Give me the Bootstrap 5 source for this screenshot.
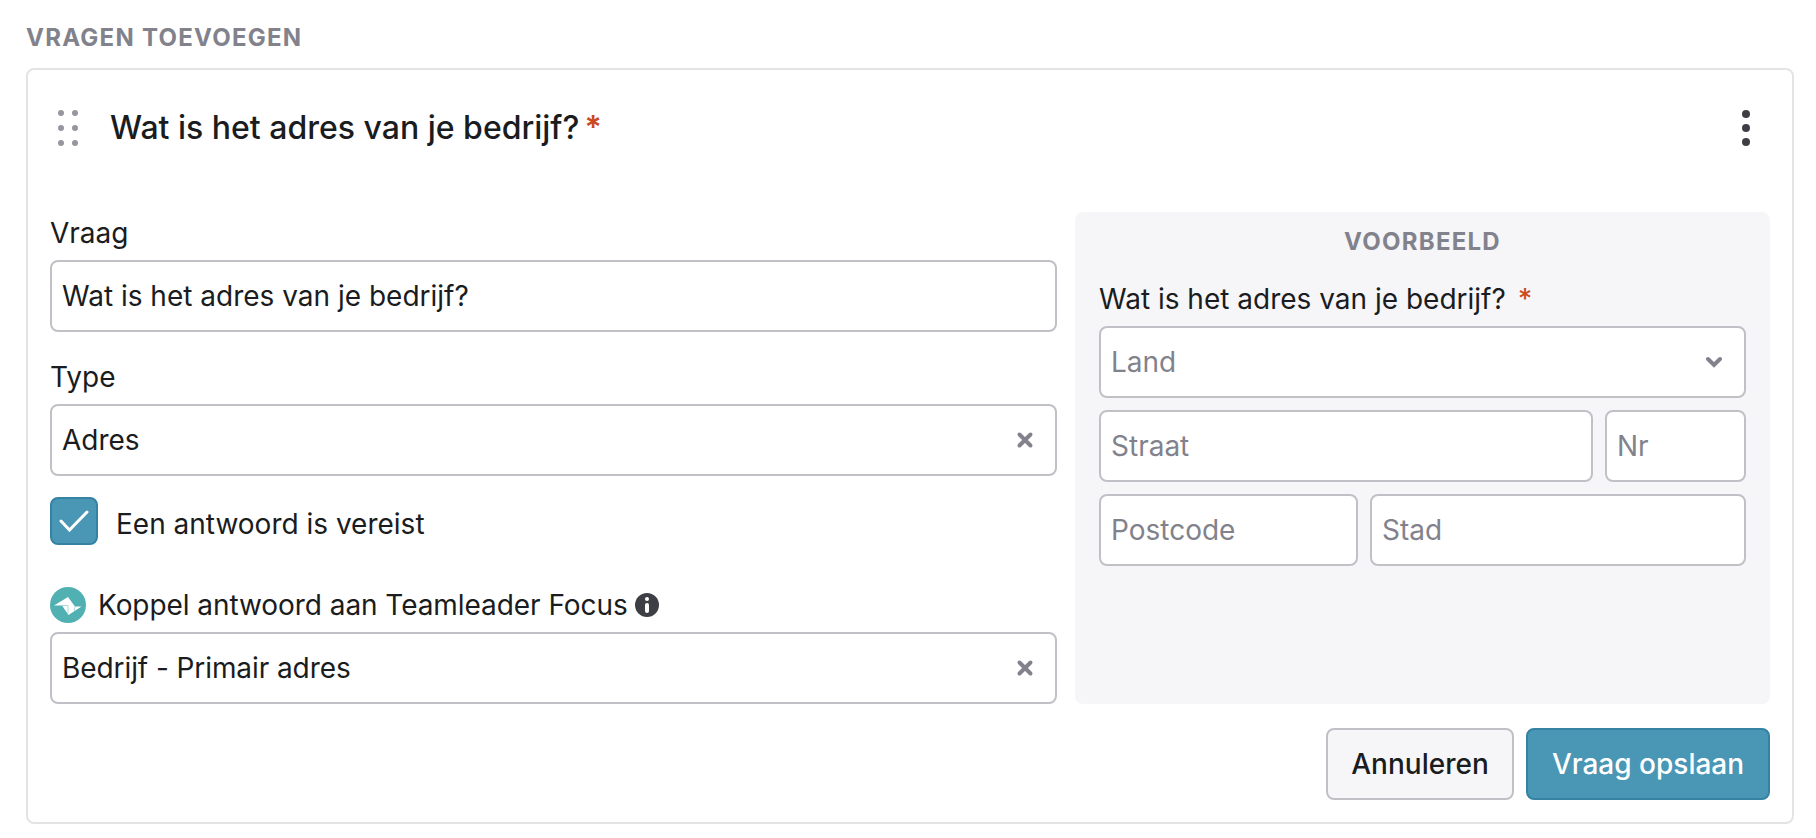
<!DOCTYPE html>
<html lang="nl">
<head>
    <meta charset="UTF-8">
    <meta name="viewport" content="width=device-width, initial-scale=1">
    <title>Vragen toevoegen</title>
    <link href="https://cdn.jsdelivr.net/npm/bootstrap@5.3.3/dist/css/bootstrap.min.css" rel="stylesheet">
    <style>
        body {
            font-family: Inter, "Liberation Sans", sans-serif;
            font-size: 28px;
            line-height: 36px;
            color: #1a1c20;
            padding: 20px 22px 14px 26px;
            background: #fff;
        }
        svg { display: block; flex-shrink: 0; }
        .section-title {
            font-size: 24px;
            line-height: 36px;
            font-weight: 700;
            letter-spacing: 1.25px;
            color: #82828c;
            margin: 0;
        }
        .question-card {
            border: 2px solid #e4e4e6;
            border-radius: 8px;
            margin-top: 12px;
            height: 756px;
            padding: 0 22px;
        }
        .question-head { height: 116px; padding: 0 20px 0 8px; }
        .question-name {
            font-size: 32px;
            line-height: 40px;
            font-weight: 500;
            margin: 0 0 0 32px;
        }
        .required-star { color: #cb4a20; font-weight: 500; }
        .question-name .required-star { margin-left: 5px; font-weight: 600; }
        .preview-label .required-star { margin-left: 12px; }
        .question-body { margin-top: 26px; gap: 18px; height: 492px; }
        .edit-col { width: 1007px; padding-top: 3px; }
        .edit-col label, .preview label { display: block; line-height: 36px; margin-bottom: 9px; }
        .edit-col .type-label { margin-top: 27px; }
        .form-control, .field {
            height: 72px;
            border: 2px solid #c0c0c6;
            border-radius: 8px;
            padding: 0 10px;
            font-size: 28px;
            line-height: 36px;
            color: #1a1c20;
            background: #fff;
        }
        .form-control::placeholder { color: #82828c; opacity: 1; }
        .field { display: flex; align-items: center; justify-content: space-between; padding-right: 21px; }
        .check-box {
            width: 48px;
            height: 48px;
            background: #4a96b5;
            border: 2px solid #3582a3;
            border-radius: 8px;
        }
        .required-row { margin-top: 21px; }
        .required-text { margin: 9px 0 0 18px; line-height: 36px; }
        .link-row { margin: 42px 0 9px; }
        .link-text { margin: 0 7px 0 12px; letter-spacing: -0.06px; }
        .linked-value { letter-spacing: -0.08px; }
        .preview {
            width: 695px;
            background: #f6f6f9;
            border-radius: 8px;
            padding: 12px 24px;
        }
        .preview-label { margin-top: 21px; }
        .preview-grid { display: grid; gap: 12px; }
        .preview-grid .field { padding-right: 22px; }
        .street-row { display: grid; grid-template-columns: 494px 1fr; gap: 12px; }
        .city-row { display: grid; grid-template-columns: 259px 1fr; gap: 12px; }
        .preview-grid .muted-text { color: #82828c; }
        .actions { margin-top: 24px; gap: 12px; }
        .actions .btn {
            height: 72px;
            border-width: 2px;
            border-radius: 8px;
            font-size: 28px;
            line-height: 36px;
            font-weight: 500;
            padding: 0;
        }
        .btn-cancel, .btn-cancel:hover { width: 188px; background: #f6f6f9; border-color: #c0c0c6; color: #1a1c20; }
        .btn-save, .btn-save:hover { width: 244px; background: #4a96b5; border-color: #3582a3; color: #fff; }
    </style>
</head>
<body>

<h1 class="section-title">VRAGEN TOEVOEGEN</h1>

<div class="question-card">
    <div class="question-head d-flex align-items-center">
        <!-- drag handle -->
        <svg width="20" height="36" viewBox="0 0 20 36" fill="#96969f">
            <circle cx="3" cy="3" r="3"/><circle cx="17" cy="3" r="3"/>
            <circle cx="3" cy="18" r="3"/><circle cx="17" cy="18" r="3"/>
            <circle cx="3" cy="33" r="3"/><circle cx="17" cy="33" r="3"/>
        </svg>
        <h2 class="question-name">Wat is het adres van je bedrijf?<span class="required-star">*</span></h2>
        <svg class="ms-auto" width="8" height="36" viewBox="0 0 8 36" fill="#3e3f44">
            <circle cx="4" cy="4" r="4"/><circle cx="4" cy="18" r="4"/><circle cx="4" cy="32" r="4"/>
        </svg>
    </div>

    <div class="question-body d-flex">
        <div class="edit-col">
            <label for="question">Vraag</label>
            <input type="text" id="question" class="form-control" value="Wat is het adres van je bedrijf?">

            <label class="type-label">Type</label>
            <div class="field">
                <span>Adres</span>
                <svg width="18" height="18" viewBox="0 0 18 18" fill="none" stroke="#82828c" stroke-width="4" stroke-linecap="round"><path d="M3.500 3.500l11 11M14.500 3.500l-11 11"/></svg>
            </div>

            <div class="required-row d-flex">
                <span class="check-box d-flex align-items-center justify-content-center">
                    <svg width="30" height="22" viewBox="0 0 30 22" fill="none" stroke="#fff" stroke-width="3" stroke-linecap="round"><path d="M2 11l8.500 9L28 2"/></svg>
                </span>
                <span class="required-text">Een antwoord is vereist</span>
            </div>

            <div class="link-row d-flex align-items-center">
                <!-- Teamleader Focus bird -->
                <svg width="36" height="36" viewBox="0 0 36 36">
                    <circle cx="18" cy="18" r="18" fill="#50b0b2"/>
                    <path d="M4 18.500L18 10l7 9.500h6.500L18.500 28l-6.500-9.500z" fill="#fff"/>
                    <path d="M11 18.500h7V27M25 19.500l-1 4.500" fill="none" stroke="#a5d7d8" stroke-width=".9"/>
                </svg>
                <span class="link-text">Koppel antwoord aan Teamleader Focus</span>
                <svg width="24" height="24" viewBox="0 0 24 24">
                    <circle cx="12" cy="12" r="12" fill="#3e3f44"/>
                    <circle cx="12" cy="6" r="2" fill="#fff"/>
                    <rect x="10" y="10" width="4" height="10" rx="2" fill="#fff"/>
                </svg>
            </div>
            <div class="field">
                <span class="linked-value">Bedrijf - Primair adres</span>
                <svg width="18" height="18" viewBox="0 0 18 18" fill="none" stroke="#82828c" stroke-width="4" stroke-linecap="round"><path d="M3.500 3.500l11 11M14.500 3.500l-11 11"/></svg>
            </div>
        </div>

        <div class="preview">
            <h2 class="section-title text-center">VOORBEELD</h2>
            <label class="preview-label">Wat is het adres van je bedrijf?<span class="required-star">*</span></label>
            <div class="preview-grid">
                <div class="field muted-text">
                    <span>Land</span>
                    <svg width="16" height="12" viewBox="0 0 16 12" fill="none" stroke="#82828c" stroke-width="4" stroke-linecap="round"><path d="M2 3l6 6 6-6"/></svg>
                </div>
                <div class="street-row">
                    <input type="text" class="form-control" placeholder="Straat">
                    <input type="text" class="form-control" placeholder="Nr">
                </div>
                <div class="city-row">
                    <input type="text" class="form-control" placeholder="Postcode">
                    <input type="text" class="form-control" placeholder="Stad">
                </div>
            </div>
        </div>
    </div>

    <div class="actions d-flex justify-content-end">
        <button type="button" class="btn btn-cancel">Annuleren</button>
        <button type="button" class="btn btn-save">Vraag opslaan</button>
    </div>
</div>

<script src="https://cdn.jsdelivr.net/npm/bootstrap@5.3.3/dist/js/bootstrap.bundle.min.js"></script>
</body>
</html>
